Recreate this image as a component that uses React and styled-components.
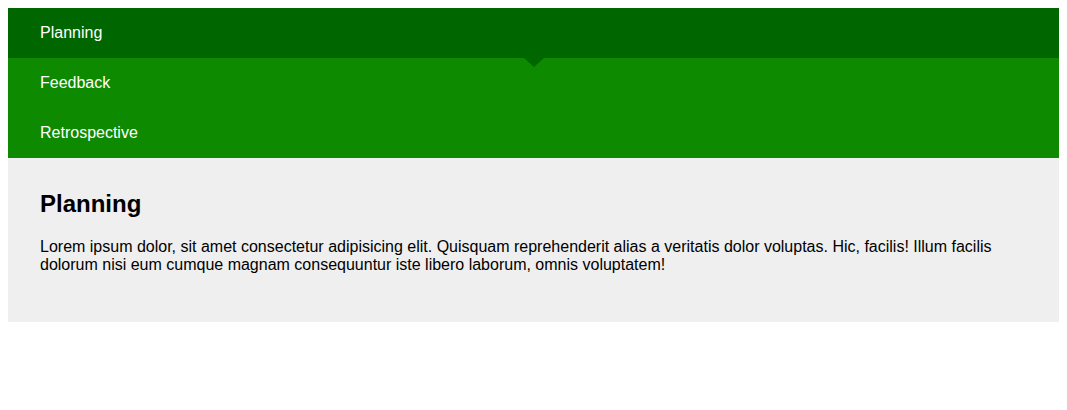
import styled, { createGlobalStyle } from "styled-components";

const tabs = [
  { id: "planning", label: "Planning" },
  { id: "feedback", label: "Feedback" },
  { id: "retro", label: "Retrospective" },
];

const active = "planning";

const App = () => {
  return (
    <>
      <GlobalStyle />
      <Wrapper>
        <TabList>
          {tabs.map((tab) => (
            <Tab key={tab.id} $active={tab.id === active}>
              {tab.label}
            </Tab>
          ))}
        </TabList>
        <Panel>
          <h2>Planning</h2>
          <p>
            Lorem ipsum dolor, sit amet consectetur adipisicing elit. Quisquam
            reprehenderit alias a veritatis dolor voluptas. Hic, facilis! Illum
            facilis dolorum nisi eum cumque magnam consequuntur iste libero
            laborum, omnis voluptatem!
          </p>
        </Panel>
      </Wrapper>
    </>
  );
};

export default App;

const GlobalStyle = createGlobalStyle`
  body {
    margin: 8px;
    font-family: "Liberation Sans", Arial, sans-serif;
    background: #fff;
  }
`;

const Wrapper = styled.div`
  display: flex;
  flex-direction: column;
`;

const TabList = styled.div`
  display: flex;
  flex-direction: column;
  background-color: #0e8a00;
`;

const Tab = styled.div`
  position: relative;
  height: 50px;
  display: flex;
  align-items: center;
  padding: 0 32px;
  color: #fff;
  font-size: 16px;
  background-color: ${(p) => (p.$active ? "#006600" : "#0e8a00")};
  z-index: ${(p) => (p.$active ? 1 : 0)};

  &::after {
    content: "";
    display: ${(p) => (p.$active ? "block" : "none")};
    position: absolute;
    left: 50%;
    top: 100%;
    margin-left: -10px;
    border-left: 10px solid transparent;
    border-right: 10px solid transparent;
    border-top: 9px solid #006600;
  }
`;

const Panel = styled.div`
  background-color: #efefef;
  padding: 32px 32px 32px;
  color: #000;

  h2 {
    margin: 0 0 20px;
    font-size: 24px;
    font-weight: bold;
  }

  p {
    margin: 0 0 16px;
    font-size: 16px;
  }
`;
